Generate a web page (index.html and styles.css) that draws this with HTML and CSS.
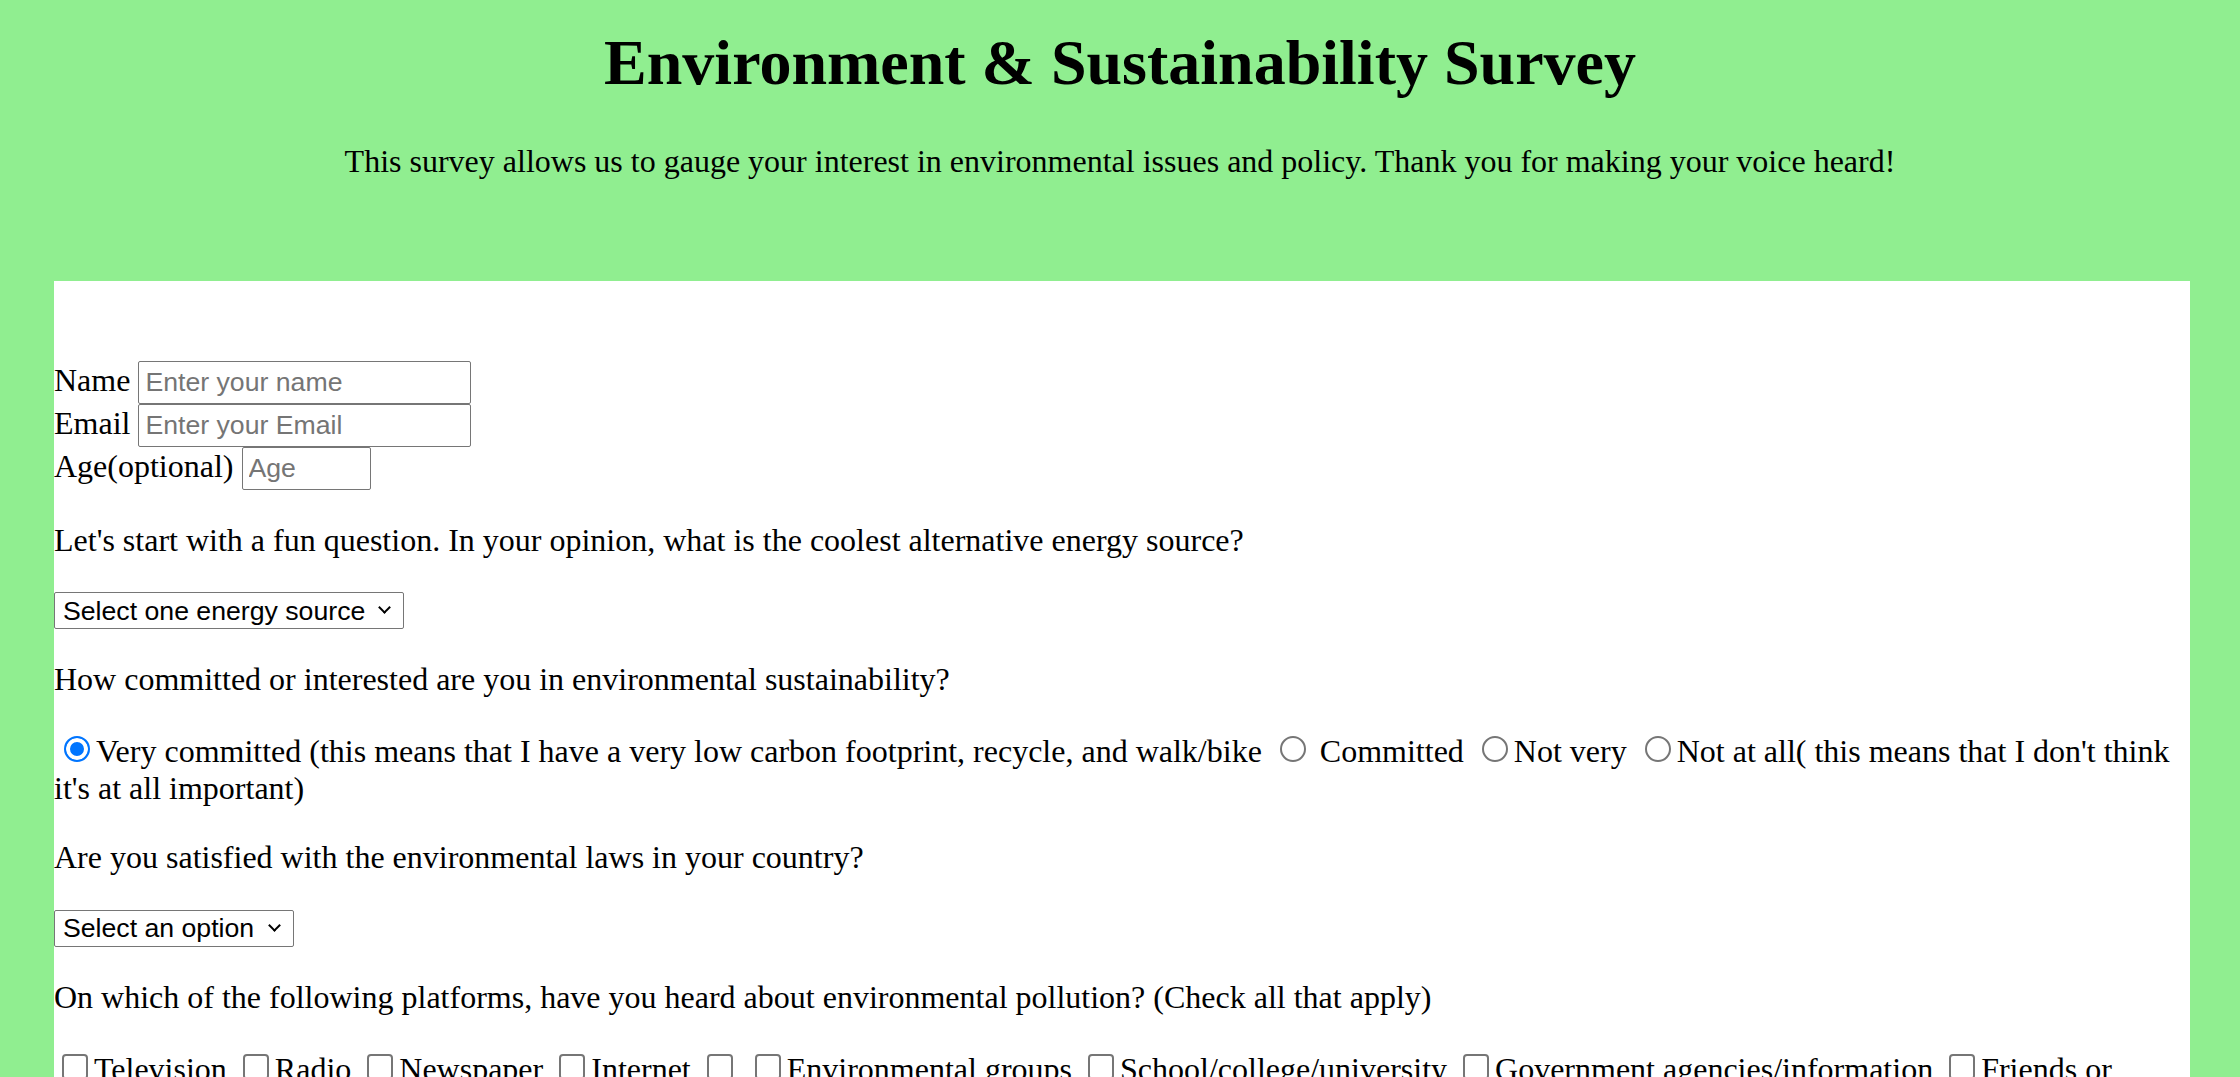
FILE: index.html
```html
<!DOCTYPE html>
<html lang="en">
<head>
<meta charset="utf-8">
<title>Environment &amp; Sustainability Survey</title>
<link rel="stylesheet" href="styles.css">
</head>
<body>
<header class="hero">
  <h1 class="hero-title">Environment &amp; Sustainability Survey</h1>
  <p class="hero-intro">This survey allows us to gauge your interest in environmental issues and policy. Thank you for making your voice heard!</p>
</header>
<form class="survey">
  <div class="field-row"><label for="name">Name</label> <input class="text-input" id="name" type="text" placeholder="Enter your name"></div>
  <div class="field-row"><label for="email">Email</label> <input class="text-input" id="email" type="email" placeholder="Enter your Email"></div>
  <div class="field-row"><label for="age">Age(optional)</label> <input class="text-input text-input--age" id="age" type="number" placeholder="Age"></div>

  <p class="question">Let's start with a fun question. In your opinion, what is the coolest alternative energy source?</p>
  <p class="answer"><span class="select-wrap"><select class="dropdown dropdown--energy" id="energy">
    <option>Select one energy source</option>
    <option>Solar</option>
    <option>Wind</option>
    <option>Hydroelectric</option>
    <option>Geothermal</option>
    <option>Tidal</option>
  </select></span></p>

  <p class="question">How committed or interested are you in environmental sustainability?</p>
  <p class="answer"><input class="choice choice--radio" type="radio" name="commit" id="c1" checked><label for="c1">Very committed (this means that I have a very low carbon footprint, recycle, and walk/bike</label>
<input class="choice choice--radio" type="radio" name="commit" id="c2"><label for="c2"> Committed</label>
<input class="choice choice--radio" type="radio" name="commit" id="c3"><label for="c3">Not very</label>
<input class="choice choice--radio" type="radio" name="commit" id="c4"><label for="c4">Not at all( this means that I don't think it's at all important)</label></p>

  <p class="question">Are you satisfied with the environmental laws in your country?</p>
  <p class="answer"><span class="select-wrap"><select class="dropdown dropdown--laws" id="laws">
    <option>Select an option</option>
    <option>Yes</option>
    <option>No</option>
    <option>Not sure</option>
  </select></span></p>

  <p class="question">On which of the following platforms, have you heard about environmental pollution? (Check all that apply)</p>
  <p class="answer"><input class="choice choice--check" type="checkbox" id="p1"><label for="p1">Television</label>
<input class="choice choice--check" type="checkbox" id="p2"><label for="p2">Radio</label>
<input class="choice choice--check" type="checkbox" id="p3"><label for="p3">Newspaper</label>
<input class="choice choice--check" type="checkbox" id="p4"><label for="p4">Internet</label>
<input class="choice choice--check" type="checkbox" id="p5">
<input class="choice choice--check" type="checkbox" id="p6"><label for="p6">Environmental groups</label>
<input class="choice choice--check" type="checkbox" id="p7"><label for="p7">School/college/university</label>
<input class="choice choice--check" type="checkbox" id="p8"><label for="p8">Government agencies/information</label>
<input class="choice choice--check" type="checkbox" id="p9"><label for="p9">Friends or family</label></p>

  <p class="question">Any other comments or suggestions?</p>
  <p class="answer"><textarea class="comments" rows="4" cols="40" placeholder="Enter your comments here"></textarea></p>
  <p class="answer"><button class="submit" type="submit">Submit</button></p>
</form>
</body>
</html>
```

FILE: styles.css
```css
html {
  background: #90ee90;
}

body {
  margin: 0;
  background: #90ee90;
  color: #000;
  font-family: "Liberation Serif", "Times New Roman", serif;
  font-size: 32px;
}

.hero {
  padding: 25.6px 0 100.4px;
  text-align: center;
}

.hero-title {
  margin: 0 0 43.6px;
  font-size: 64px;
  font-weight: bold;
}

.hero-intro {
  margin: 0;
}

.survey {
  margin: 0 50px 0 54px;
  padding: 80.3px 0 120px;
  background: #fff;
}

.field-row {
  margin: 0;
}

.text-input {
  box-sizing: border-box;
  width: 333px;
  height: 43px;
  margin: 0;
  padding: 0 6px;
  border: 1px solid #767676;
  border-radius: 2px;
  background: #fff;
  color: #000;
  font-family: "Liberation Sans", Arial, sans-serif;
  font-size: 26.67px;
}

.text-input--age {
  width: 129px;
  -moz-appearance: textfield;
  appearance: textfield;
}

.text-input--age::-webkit-outer-spin-button,
.text-input--age::-webkit-inner-spin-button {
  -webkit-appearance: none;
  margin: 0;
}

.text-input::placeholder {
  color: #757575;
}

.question,
.answer {
  margin: 32px 0;
}

.select-wrap {
  position: relative;
  display: inline-flex;
}

.select-wrap::after {
  content: "";
  position: absolute;
  right: 15px;
  top: 11px;
  width: 7px;
  height: 7px;
  border-right: 2px solid #000;
  border-bottom: 2px solid #000;
  transform: rotate(45deg);
  pointer-events: none;
}

.dropdown {
  -webkit-appearance: none;
  appearance: none;
  box-sizing: border-box;
  height: 37px;
  margin: 0;
  padding: 0 36px 0 8px;
  border: 1px solid #767676;
  border-radius: 2px;
  background: #fff;
  color: #000;
  font-family: "Liberation Sans", Arial, sans-serif;
  font-size: 26.67px;
}

.dropdown--energy {
  width: 350px;
}

.dropdown--laws {
  width: 240px;
}

.choice {
  -webkit-appearance: none;
  appearance: none;
  box-sizing: border-box;
  width: 26px;
  height: 26px;
  border: 2px solid #767676;
  background: #fff;
}

.choice--radio {
  margin: 6px 6px 0 10px;
  border-radius: 50%;
}

.choice--radio:checked {
  border-color: #0075ff;
  background: #0075ff;
  box-shadow: inset 0 0 0 4px #fff;
}

.choice--check {
  margin: 6px 6px 0 8px;
  border-radius: 4px;
}

.comments {
  font-family: "Liberation Sans", Arial, sans-serif;
  font-size: 26.67px;
}

.submit {
  font-family: "Liberation Sans", Arial, sans-serif;
  font-size: 26.67px;
}
```
